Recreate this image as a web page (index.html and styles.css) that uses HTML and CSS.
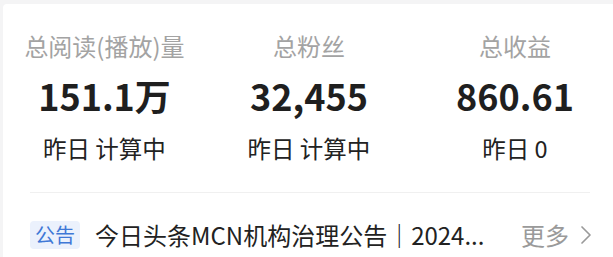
FILE: index.html
```html
<!DOCTYPE html>
<html lang="zh-CN">
<head>
<meta charset="utf-8">
<link rel="stylesheet" href="styles.css">
</head>
<body>
<div class="card">
  <div class="stats">
    <div class="stat">
      <div class="label">总阅读(播放)量</div>
      <div class="value">151.1万</div>
      <div class="sub">昨日 计算中</div>
    </div>
    <div class="stat">
      <div class="label">总粉丝</div>
      <div class="value">32,455</div>
      <div class="sub">昨日 计算中</div>
    </div>
    <div class="stat">
      <div class="label">总收益</div>
      <div class="value">860.61</div>
      <div class="sub">昨日 0</div>
    </div>
  </div>
  <div class="divider"></div>
  <div class="notice">
    <span class="badge">公告</span>
    <span class="title">今日头条MCN机构治理公告｜2024...</span>
    <span class="more">更多
      <svg class="chev" width="12" height="20" viewBox="0 0 12 20"><path d="M2 2 L10 10 L2 18" fill="none" stroke="#9a9a9a" stroke-width="1.7" stroke-linecap="round" stroke-linejoin="round"/></svg>
    </span>
  </div>
</div>
</body>
</html>
```

FILE: styles.css
```css
html, body {
  margin: 0;
  padding: 0;
}
body {
  background: #f4f4f5;
  width: 613px;
  height: 257px;
  overflow: hidden;
  font-family: "Noto Sans CJK SC", "Noto Sans", sans-serif;
}
.card {
  background: #ffffff;
  margin: 4px 0 0 3px;
  height: 253px;
  border-top-left-radius: 4px;
}
.stats {
  display: grid;
  grid-template-columns: 203px 206px 206px;
  padding-top: 26px;
}
.stat {
  display: flex;
  flex-direction: column;
  align-items: center;
}
.label {
  font-size: 24px;
  line-height: 32px;
  color: #a3a3a3;
}
.value {
  margin-top: 11px;
  font-size: 36px;
  line-height: 44px;
  font-weight: 600;
  color: #1f1f1f;
}
.sub {
  margin-top: 15px;
  font-size: 23.5px;
  line-height: 32px;
  color: #222222;
}
.divider {
  margin: 28px 23px 0 27px;
  height: 1px;
  background: #f0f0f0;
}
.notice {
  display: flex;
  align-items: center;
  padding: 28px 0 0 27px;
}
.badge {
  background: #ebf1fc;
  color: #3f78d6;
  font-size: 20px;
  line-height: 28px;
  padding: 0 5px;
  border-radius: 4px;
}
.title {
  margin-left: 15px;
  font-size: 24px;
  line-height: 28px;
  color: #222222;
  white-space: nowrap;
}
.more {
  margin-left: auto;
  margin-right: 21px;
  display: flex;
  align-items: center;
  gap: 11px;
  font-size: 24px;
  line-height: 28px;
  color: #9a9a9a;
}
.chev {
  display: block;
}
```
